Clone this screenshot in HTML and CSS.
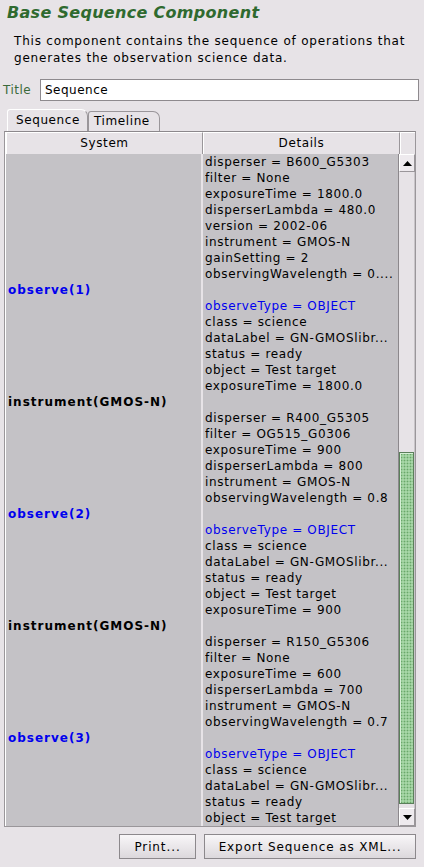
FILE: index.html
```html
<!DOCTYPE html>
<html>
<head>
<meta charset="utf-8">
<link rel="stylesheet" href="styles.css">
</head>
<body>
<div class="page">
  <h1 class="heading">Base Sequence Component</h1>
  <p class="desc">This component contains the sequence of operations that generates the observation science data.</p>
  <div class="title-row">
    <label class="title-label">Title</label>
    <div class="title-input">Sequence</div>
  </div>
  <div class="tabs">
    <div class="tab active">Sequence</div>
    <div class="tab">Timeline</div>
  </div>
  <div class="table">
    <div class="thead">
      <div class="th th-sys">System</div>
      <div class="th th-det">Details</div>
      <div class="th th-corner"></div>
    </div>
    <div class="tbody">
      <div class="rows">
        <div class="row">
          <div class="sys"></div>
          <div class="det">
            <div class="ln">disperser = B600_G5303</div>
            <div class="ln">filter = None</div>
            <div class="ln">exposureTime = 1800.0</div>
            <div class="ln">disperserLambda = 480.0</div>
            <div class="ln">version = 2002-06</div>
            <div class="ln">instrument = GMOS-N</div>
            <div class="ln">gainSetting = 2</div>
            <div class="ln">observingWavelength = 0....</div>
          </div>
        </div>
        <div class="row">
          <div class="sys obs">observe(1)</div>
          <div class="det">
            <div class="ln"></div>
            <div class="ln blue">observeType = OBJECT</div>
            <div class="ln">class = science</div>
            <div class="ln">dataLabel = GN-GMOSlibr...</div>
            <div class="ln">status = ready</div>
            <div class="ln">object = Test target</div>
            <div class="ln">exposureTime = 1800.0</div>
          </div>
        </div>
        <div class="row">
          <div class="sys">instrument(GMOS-N)</div>
          <div class="det">
            <div class="ln"></div>
            <div class="ln">disperser = R400_G5305</div>
            <div class="ln">filter = OG515_G0306</div>
            <div class="ln">exposureTime = 900</div>
            <div class="ln">disperserLambda = 800</div>
            <div class="ln">instrument = GMOS-N</div>
            <div class="ln">observingWavelength = 0.8</div>
          </div>
        </div>
        <div class="row">
          <div class="sys obs">observe(2)</div>
          <div class="det">
            <div class="ln"></div>
            <div class="ln blue">observeType = OBJECT</div>
            <div class="ln">class = science</div>
            <div class="ln">dataLabel = GN-GMOSlibr...</div>
            <div class="ln">status = ready</div>
            <div class="ln">object = Test target</div>
            <div class="ln">exposureTime = 900</div>
          </div>
        </div>
        <div class="row">
          <div class="sys">instrument(GMOS-N)</div>
          <div class="det">
            <div class="ln"></div>
            <div class="ln">disperser = R150_G5306</div>
            <div class="ln">filter = None</div>
            <div class="ln">exposureTime = 600</div>
            <div class="ln">disperserLambda = 700</div>
            <div class="ln">instrument = GMOS-N</div>
            <div class="ln">observingWavelength = 0.7</div>
          </div>
        </div>
        <div class="row">
          <div class="sys obs">observe(3)</div>
          <div class="det">
            <div class="ln"></div>
            <div class="ln blue">observeType = OBJECT</div>
            <div class="ln">class = science</div>
            <div class="ln">dataLabel = GN-GMOSlibr...</div>
            <div class="ln">status = ready</div>
            <div class="ln">object = Test target</div>
          </div>
        </div>
      </div>
      <div class="scrollbar">
        <div class="sb-btn"><svg width="9" height="5" viewBox="0 0 9 5"><path d="M0 5 L4.5 0 L9 5 Z" fill="#000"/></svg></div>
        <div class="sb-track">
          <div class="sb-thumb"></div>
        </div>
        <div class="sb-btn"><svg width="9" height="5" viewBox="0 0 9 5"><path d="M0 0 L4.5 5 L9 0 Z" fill="#000"/></svg></div>
      </div>
    </div>
  </div>
  <div class="buttons">
    <button class="btn btn-print">Print...</button>
    <button class="btn btn-export">Export Sequence as XML...</button>
  </div>
</div>
</body>
</html>
```

FILE: styles.css
```css
html, body {
  margin: 0;
  padding: 0;
  background: #e7e3e7;
}
body {
  font-family: "DejaVu Sans", "Liberation Sans", sans-serif;
  font-size: 12px;
  color: #000;
}
.page {
  width: 424px;
  height: 867px;
  display: flex;
  flex-direction: column;
}
.heading {
  margin: 0;
  padding: 2px 0 0 7px;
  height: 22px;
  font-size: 16px;
  font-weight: bold;
  font-style: italic;
  color: #2f6a2f;
  letter-spacing: 0.3px;
  line-height: 22px;
}
.desc {
  margin: 0;
  padding: 9px 6px 0 14px;
  line-height: 17px;
  letter-spacing: 0.8px;
}
.title-row {
  display: flex;
  align-items: center;
  margin-top: 12px;
  padding: 0 5px 0 3px;
  height: 22px;
}
.title-label {
  color: #3b6a3b;
  width: 37px;
  letter-spacing: 0.5px;
}
.title-input {
  flex: 1;
  height: 20px;
  line-height: 20px;
  background: #fff;
  border: 1px solid #8e8a8e;
  padding-left: 4px;
  letter-spacing: 0.5px;
}
.tabs {
  display: flex;
  margin-top: 9px;
  padding-left: 7px;
  height: 21px;
  align-items: flex-end;
}
.tab {
  height: 19px;
  line-height: 19px;
  padding: 0 9px 0 5px;
  border: 1px solid #9a969a;
  border-bottom: none;
  border-radius: 3px 7px 0 0;
  background: #e7e3e7;
  letter-spacing: 0.6px;
}
.tab.active {
  height: 21px;
  line-height: 21px;
  border-color: #ffffff #9a969a #ffffff #ffffff;
  padding: 0 7px 0 8px;
}
.table {
  margin: 0 8px 0 4px;
  border: 1px solid #9a969a;
  border-top-color: #8c888c;
  display: flex;
  flex-direction: column;
}
.thead {
  display: grid;
  grid-template-columns: 197px 197px 1fr;
  height: 22px;
  border-left: 1px solid #fff;
}
.th {
  background: #e7e3e7;
  text-align: center;
  line-height: 21px;
  border-right: 1px solid #9a969a;
  border-bottom: 1px solid #9a969a;
  border-top: 1px solid #fff;
  border-left: 1px solid #fff;
  letter-spacing: 0.6px;
}
.th-corner {
  border-right: none;
}
.tbody {
  display: flex;
  height: 672px;
  overflow: hidden;
  border-left: 1px solid #fff;
}
.rows {
  flex: 1;
  background: #c4c2c6;
  overflow: hidden;
}
.row {
  display: grid;
  grid-template-columns: 197px 1fr;
}
.sys {
  padding-left: 2px;
  line-height: 16px;
  font-weight: bold;
  border-right: 2px solid #e7e3e7;
  letter-spacing: 1px;
}
.sys.obs {
  color: #0000ee;
}
.det {
  padding-left: 2px;
}
.ln {
  height: 16px;
  line-height: 16px;
  white-space: nowrap;
  overflow: hidden;
  letter-spacing: 0.65px;
}
.blue {
  color: #0000ee;
}
.scrollbar {
  width: 16px;
  display: flex;
  flex-direction: column;
  background: #e7e3e7;
  border-left: 1px solid #8c888c;
}
.sb-btn {
  height: 16px;
  display: flex;
  align-items: center;
  justify-content: center;
  background: #eeeaee;
  border: 1px solid #9a969a;
  border-top-color: #fff;
  border-left-color: #fff;
}
.sb-track {
  flex: 1;
  display: flex;
  flex-direction: column;
  justify-content: flex-end;
  padding-bottom: 4px;
  border-right: 1px solid #c8c4c8;
}
.sb-thumb {
  height: 350px;
  border: 1px solid #5b7f5b;
  background-color: #a6d6a6;
  background-image: radial-gradient(circle, #6aa86a 0.8px, transparent 1.1px);
  background-size: 3px 3px;
  box-shadow: inset 1px 1px 0 #d6f0d6;
}
.buttons {
  display: flex;
  justify-content: flex-end;
  gap: 8px;
  padding: 7px 8px 0 0;
}
.btn {
  font-family: "DejaVu Sans", "Liberation Sans", sans-serif;
  font-size: 12px;
  letter-spacing: 0.9px;
  height: 25px;
  border: 1px solid #8c888c;
  background: linear-gradient(#f8f6f8, #dcd8dc);
  color: #000;
  padding: 0;
}
.btn-print {
  width: 77px;
}
.btn-export {
  width: 212px;
}
```
